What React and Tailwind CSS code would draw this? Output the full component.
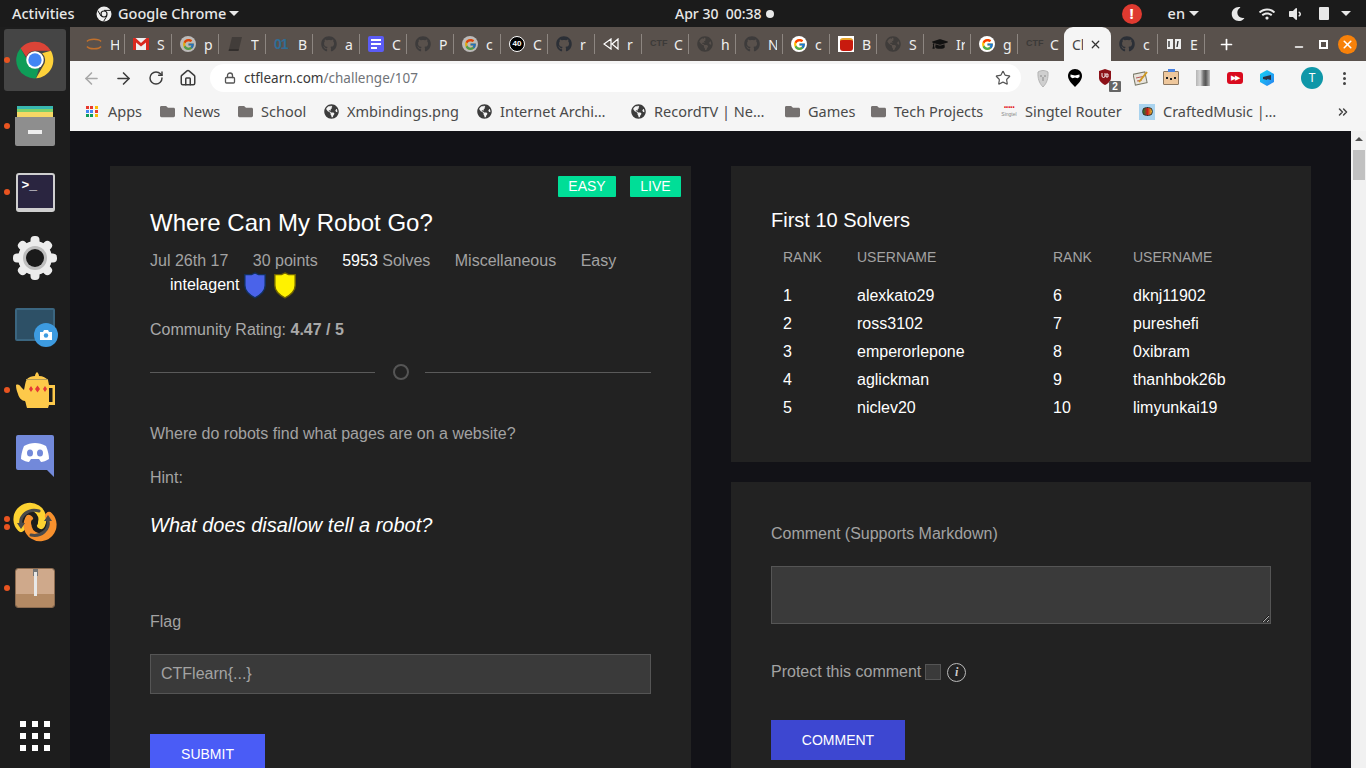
import { ArrowLeft, ArrowRight, RotateCw, Home, Lock, Star, X, Plus, Minus, ChevronsRight } from 'lucide-react'
import { FaGithub, FaGlobeAmericas, FaFolder, FaGraduationCap, FaMoon, FaWifi, FaVolumeDown } from 'react-icons/fa'
import { FcGoogle } from 'react-icons/fc'

// ── Little drawings ────────────────────────────────────────
function ChromeLogo({ size = 40 }) {
  return (
    <svg width={size} height={size} viewBox="0 0 48 48">
      <path d="M24 2a22 22 0 0 1 19.05 11H24a11 11 0 0 0-10.4 7.4L6.6 9.9A22 22 0 0 1 24 2z" fill="#db4437" />
      <path d="M43.05 13A22 22 0 0 1 25.2 46l9.2-16a11 11 0 0 0-1.9-14z" fill="#fdd13a" />
      <path d="M25.2 46A22 22 0 0 1 6.6 9.9L15 24.5A11 11 0 0 0 29 33.5z" fill="#0f9d58" />
      <circle cx="24" cy="24" r="10.5" fill="#fff" />
      <circle cx="24" cy="24" r="8" fill="#4285f4" />
    </svg>
  )
}

function ChromeMono() {
  return (
    <svg width="16" height="16" viewBox="0 0 16 16" fill="none">
      <circle cx="8" cy="8" r="7.5" fill="#eee" />
      <circle cx="8" cy="8" r="3.6" fill="#1b1b1b" />
      <circle cx="8" cy="8" r="2.4" fill="#eee" />
      <path d="M8 4.4h6.6M5 10 1.8 4.6M10.9 10 7.6 15.4" stroke="#1b1b1b" strokeWidth="1" />
    </svg>
  )
}

function Caret({ className = '' }) {
  return <span className={`inline-block w-0 h-0 border-l-[5px] border-r-[5px] border-t-[5px] border-l-transparent border-r-transparent border-t-[#e8e8e8] ${className}`} />
}

function Shield({ fill, edge }) {
  return (
    <svg width="24" height="27" viewBox="0 0 20 22.5">
      <path d="M10 0.800 L13 2.200 L18.500 2.200 L18.500 11 C18.500 16 14 19.500 10 21.500 C6 19.500 1.500 16 1.500 11 L1.500 2.200 L7 2.200 Z" fill={fill} stroke={edge} strokeWidth="1.2" />
    </svg>
  )
}

// ── Tab strip ──────────────────────────────────────────────
const TextIcon = ({ children, className }) => (
  <span className={`w-4 text-center font-['Liberation_Sans',sans-serif] font-bold text-[9px] ${className}`}>{children}</span>
)

const RingIcon = () => (
  <svg width="16" height="16" viewBox="0 0 16 16" fill="none">
    <path d="M1 5.500C3 2.500 13 2.500 15 5.500M1 10.500c2 3 12 3 14 0" stroke="#c0702c" strokeWidth="1.400" />
  </svg>
)
const GmailIcon = () => (
  <svg width="16" height="14" viewBox="0 0 16 14">
    <rect y="1" width="16" height="12" fill="#eee" />
    <path d="M0 1h2.500L8 6l5.500-5H16v12h-3V5.500L8 9.500l-5-4V13H0z" fill="#d9281e" />
  </svg>
)
const BookIcon = () => (
  <svg width="16" height="16" viewBox="0 0 16 16">
    <path d="M5 1h10l-3 12H2z" fill="#423d3a" />
    <path d="M2 13h10l-.5 2H1.500z" fill="#332f2d" />
  </svg>
)
const OneIcon = () => <span className="w-4 font-['Liberation_Sans',sans-serif] font-bold text-[14px] tracking-[-1px] text-[#2f6d96]">01</span>
const DocIcon = () => (
  <span className="w-4 h-4 rounded-[2px] bg-[#5b5cf6] flex flex-col justify-center gap-[2px] pl-[3px]">
    <span className="block h-[2px] w-[10px] bg-white" />
    <span className="block h-[2px] w-[10px] bg-white" />
    <span className="block h-[2px] w-[6px] bg-white" />
  </span>
)
const BlackBadge = () => (
  <span className="w-4 h-4 rounded-full bg-black border border-white flex items-center justify-center text-white font-['Liberation_Sans',sans-serif] font-bold text-[8px]">40</span>
)
const RewindIcon = () => (
  <svg width="16" height="12" viewBox="0 0 16 12" fill="none" stroke="#fff" strokeWidth="1.200">
    <path d="M8 1 1 6l7 5zM15 1 9 6l6 5z" />
  </svg>
)
const RedIcon = () => (
  <span className="w-4 h-4 bg-white flex items-center justify-center">
    <span className="w-[13px] h-[13px] rounded-[3px] bg-[#c81a0e] border-t-2 border-[#e8a52a]" />
  </span>
)
const OpenBook = () => (
  <svg width="16" height="14" viewBox="0 0 16 14">
    <path d="M1 2h6v10H1zM9 2h6v10H9z" fill="#eee" />
    <path d="M3 4v6M12 4l-1 6" stroke="#333" strokeWidth="1.400" />
  </svg>
)

const gh = <FaGithub size={16} color="#2b2f36" />
const ghDim = <FaGithub size={16} color="#3d3b3b" />
const globeDim = <FaGlobeAmericas size={16} color="#3f3c3a" />
const gGray = <span className="w-4 h-4 rounded-full bg-[#d5d5d5] flex items-center justify-center opacity-80"><FcGoogle size={13} /></span>
const gColor = <span className="w-4 h-4 rounded-full bg-white flex items-center justify-center"><FcGoogle size={13} /></span>
const ctf = <TextIcon className="text-[#3c3a38]">CTF</TextIcon>

const TABS = [
  [<RingIcon />, 'H'], [<GmailIcon />, 'S'], [gGray, 'p'], [<BookIcon />, 'T'], [<OneIcon />, 'B'],
  [ghDim, 'a'], [<DocIcon />, 'C'], [ghDim, 'P'], [gGray, 'c'], [<BlackBadge />, 'C'],
  [gh, 'r'], [<RewindIcon />, 'r'], [ctf, 'C'], [globeDim, 'h'], [ghDim, 'N'],
  [gColor, 'c'], [<RedIcon />, 'B'], [globeDim, 'S'], [<FaGraduationCap size={16} color="#111" />, 'Ir'], [gColor, 'g'],
  [ctf, 'C'],
]

function Tab({ icon, label }) {
  return (
    <div className="w-[47px] h-[20px] flex items-center shrink-0 border-r border-[#8d8681] pl-[8px]">
      <span className="w-4 h-4 flex items-center justify-center shrink-0">{icon}</span>
      <span className="ml-[8px] w-[9px] overflow-hidden text-[14px] text-[#efefef]">{label}</span>
    </div>
  )
}

function TabStrip() {
  return (
    <div className="h-[34px] bg-[#59514c] flex items-center pl-[8px] shrink-0 font-['Noto_Sans',sans-serif]">
      {TABS.map(([icon, label], i) => <Tab key={i} icon={icon} label={label} />)}
      <div className="w-[47px] h-[34px] self-end bg-[#f5f5f5] rounded-t-[9px] flex items-center pl-[8px] shrink-0 -ml-px">
        <span className="w-[11px] text-[14px] text-[#444] overflow-hidden">Cl</span>
        <X size={13} strokeWidth={2.2} className="text-[#333] ml-[6px]" />
      </div>
      <Tab icon={gh} label="c" />
      <Tab icon={<OpenBook />} label="E" />
      <Plus size={17} strokeWidth={2.4} className="text-white ml-[13px]" />
      <Minus size={12} strokeWidth={3} className="text-white ml-[58px] mt-[5px]" />
      <span className="w-[9px] h-[9px] border-2 border-white ml-[14px]" />
      <span className="w-[19px] h-[19px] rounded-full bg-[#f7810a] flex items-center justify-center ml-[10px]">
        <X size={13} strokeWidth={3} className="text-white" />
      </span>
    </div>
  )
}

// ── Toolbar ────────────────────────────────────────────────
function Extensions() {
  return (
    <div className="flex items-center ml-[6px]">
      <span className="w-[32px] flex justify-center">
        <svg width="12" height="17" viewBox="0 0 12 17">
          <path d="M1 2c3-2 7-2 10 0 .5 6-1 11-5 15C2 13 .5 8 1 2z" fill="#cfcfcf" stroke="#aaa" strokeWidth=".8" />
          <path d="M3 6h2M7 6h2M6 7v4" stroke="#8a8a8a" />
        </svg>
      </span>
      <span className="w-[32px] flex justify-center">
        <svg width="14" height="18" viewBox="0 0 14 18">
          <path d="M7 0c4 0 7 3 7 7 0 4-4 8-7 11-3-3-7-7-7-11 0-4 3-7 7-7z" fill="#000" />
          <path d="M2.500 5.500 7 6.500l4.500-1V8l-2 1.200L7 8.500l-2.500.7L2.500 8z" fill="#fff" />
        </svg>
      </span>
      <span className="w-[30px] flex justify-center relative">
        <svg width="12" height="16" viewBox="0 0 12 16" className="-ml-[2px] -mt-[3px]">
          <path d="M0 2 6 0l6 2v7c0 3-3 5.500-6 7-3-1.500-6-4-6-7z" fill="#8c1219" />
          <path d="M3 4v3a1.500 1.500 0 0 0 3 0V4M7 5h2v3H7z" stroke="#fff" strokeWidth=".9" fill="none" />
        </svg>
        <span className="absolute left-[18px] top-[9px] w-[12px] h-[11px] rounded-[1px] bg-[#666] text-white text-[10px] leading-[11px] text-center font-bold font-['Liberation_Sans',sans-serif]">2</span>
      </span>
      <span className="w-[40px] flex justify-center">
        <svg width="16" height="16" viewBox="0 0 16 16">
          <rect x="1" y="3" width="12" height="11" transform="rotate(-12 7 8)" fill="#e8e4dc" stroke="#776" />
          <path d="M3 8l7-1.500M4 11l5-1" stroke="#a33" strokeWidth=".8" />
          <path d="M6 12 14 2" stroke="#d09a22" strokeWidth="2" />
        </svg>
      </span>
      <span className="w-[20px] flex justify-center">
        <span className="relative w-[16px] h-[14px] rounded-[1px] bg-[#eec79c] border border-[#8a7660] flex items-center justify-center gap-[2px]">
          <span className="absolute -top-[3px] left-[4px] w-[7px] h-[3px] bg-[#4a82e0]" />
          <i className="block w-[2px] h-[2px] bg-[#222]" />
          <i className="block w-[2px] h-[2px] bg-[#222] mt-[2px]" />
          <i className="block w-[2px] h-[2px] bg-[#222]" />
        </span>
      </span>
      <span className="w-[44px] flex justify-center">
        <span className="w-[14px] h-[16px] bg-[linear-gradient(90deg,#b5b5b5_0%,#d8d8d8_30%,#6e6e6e_55%,#555_70%,#bdbdbd_100%)]" />
      </span>
      <span className="w-[20px] flex justify-center">
        <span className="w-[16px] h-[12px] rounded-[3px] bg-[#d90a1e] text-white text-[7px] leading-[12px] text-center tracking-[-1px]">▶▶</span>
      </span>
      <span className="w-[44px] flex justify-center">
        <svg width="14" height="16" viewBox="0 0 14 16">
          <defs>
            <linearGradient id="hexFill" x1="0" y1="0" x2="1" y2="1">
              <stop offset="0" stopColor="#12d6f5" />
              <stop offset="1" stopColor="#2a80f0" />
            </linearGradient>
          </defs>
          <path d="M7 0l7 4v8l-7 4-7-4V4z" fill="url(#hexFill)" />
          <path d="M3 7l4-1v4l-4-1zM7 6l4-1v5l-4-1z" fill="#2a3344" />
        </svg>
      </span>
    </div>
  )
}

function Toolbar() {
  return (
    <div className="h-[34px] bg-[#f5f5f5] flex items-center pl-[12px] shrink-0 font-['Noto_Sans',sans-serif]">
      <ArrowLeft size={19} strokeWidth={2} className="text-[#a8a8a8]" />
      <ArrowRight size={19} strokeWidth={2} className="text-[#3c3c3c] ml-[13px]" />
      <RotateCw size={16} strokeWidth={2.2} className="text-[#3c3c3c] ml-[15px]" />
      <Home size={18} strokeWidth={2} className="text-[#3c3c3c] ml-[15px]" />
      <div className="w-[811px] h-[28px] ml-[13px] rounded-full bg-white flex items-center pl-[14px] pr-[10px]">
        <Lock size={12} strokeWidth={2.6} className="text-[#555]" />
        <span className="ml-[8px] text-[13.500px] text-[#3a3a3a] pt-[1px]">ctflearn.com<span className="text-[#6f7378]">/challenge/107</span></span>
        <Star size={16} strokeWidth={1.8} className="text-[#555] ml-auto" />
      </div>
      <Extensions />
      <span className="w-[22px] h-[22px] rounded-full bg-[#0f97a8] text-white text-[12px] flex items-center justify-center ml-[12px]">T</span>
      <span className="flex flex-col gap-[2px] ml-[20px]">
        <i className="block w-[3px] h-[3px] rounded-full bg-[#444]" />
        <i className="block w-[3px] h-[3px] rounded-full bg-[#444]" />
        <i className="block w-[3px] h-[3px] rounded-full bg-[#444]" />
      </span>
    </div>
  )
}

// ── Bookmarks ──────────────────────────────────────────────
const folder = <FaFolder size={15} color="#757170" />
const globe = <FaGlobeAmericas size={15} color="#3c3c3c" />
const appsDots = ['#e8392c', '#e8392c', '#fbbc05', '#4285f4', '#4285f4', '#e8392c', '#0f9d58', '#0f9d58', '#fbbc05']
const appsGrid = (
  <span className="grid grid-cols-3 gap-[1px] w-[13px]">
    {appsDots.map((c, i) => <i key={i} className="block w-[3px] h-[3px]" style={{ background: c }} />)}
  </span>
)
const singtel = (
  <span className="flex flex-col items-center leading-none w-[17px]">
    <span className="text-[#e3151a] text-[7px] leading-[6px] tracking-[-0.5px]">•••••</span>
    <span className="text-[#888] text-[5px] leading-[7px] font-['Liberation_Sans',sans-serif]">Singtel</span>
  </span>
)
const crafted = (
  <span className="w-4 h-4 bg-[#a9d3ee] flex items-center justify-center">
    <span className="w-[11px] h-[9px] rounded-full bg-[linear-gradient(90deg,#1b7b2c,#c81a1a,#e8c02c)] border border-[#333]" />
  </span>
)

const BOOKMARKS = [
  [appsGrid, 'Apps', 'w-[76px]', 'pl-[1px]'],
  [folder, 'News', 'w-[78px]'],
  [folder, 'School', 'w-[86px]'],
  [globe, 'Xmbindings.png', 'w-[153px]'],
  [globe, 'Internet Archi…', 'w-[154px]'],
  [globe, 'RecordTV | Ne…', 'w-[154px]'],
  [folder, 'Games', 'w-[86px]'],
  [folder, 'Tech Projects', 'w-[131px]'],
  [singtel, 'Singtel Router', 'w-[138px]'],
  [crafted, 'CraftedMusic |…', 'w-[197px]'],
]

function Bookmarks() {
  return (
    <div className="h-[36px] bg-[#f5f5f5] flex items-center pl-[13px] pb-[3px] shrink-0 font-['Noto_Sans',sans-serif] text-[14.500px] text-[#4a4a4a] whitespace-nowrap">
      {BOOKMARKS.map(([icon, label, w, extra]) => (
        <div key={label} className={`flex items-center shrink-0 ${w} ${extra ?? ''}`}>
          <span className="w-4 flex justify-center shrink-0">{icon}</span>
          <span className="ml-[8px]">{label}</span>
        </div>
      ))}
      <ChevronsRight size={14} strokeWidth={2.6} className="text-[#444]" />
    </div>
  )
}

// ── Challenge card ─────────────────────────────────────────
function Badge({ children, width }) {
  return <span className={`h-[21px] text-center rounded-[1px] bg-[#00de97] text-white text-[14px] leading-[21px] ${width}`}>{children}</span>
}

function ChallengeCard() {
  return (
    <section className="relative w-[581px] bg-[#222222] px-[40px] pt-[42px] pb-[60px] shrink-0">
      <div className="absolute top-[10px] right-[10px] flex gap-[14px]">
        <Badge width="w-[58px]">EASY</Badge>
        <Badge width="w-[51px]">LIVE</Badge>
      </div>
      <h1 className="text-[24px] leading-[29px] text-white">Where Can My Robot Go?</h1>
      <div className="mt-[12px] text-[16px] leading-[24px] text-[#a3a3a3]">
        <div className="flex gap-[24.500px]">
          <span>Jul 26th 17</span>
          <span>30 points</span>
          <span><span className="text-white">5953</span> Solves</span>
          <span>Miscellaneous</span>
          <span>Easy</span>
        </div>
        <div className="flex items-center h-[24px] pl-[20px] text-white">
          <span>intelagent</span>
          <span className="ml-[4px] flex"><Shield fill="#4a63ea" edge="#12305c" /></span>
          <span className="ml-[6px] flex"><Shield fill="#fff200" edge="#6e6200" /></span>
        </div>
      </div>
      <p className="mt-[21px] text-[16px] leading-[24px] text-[#a9a9a9]">
        Community Rating: <strong className="font-bold">4.47 / 5</strong>
      </p>
      <div className="mt-[18px] flex items-center h-[24px]">
        <span className="h-px w-[225px] bg-[#5a5a5a]" />
        <span className="w-[16px] h-[16px] rounded-full border-2 border-[#555] ml-[18px]" />
        <span className="h-px w-[226px] bg-[#5a5a5a] ml-[16px]" />
      </div>
      <p className="mt-[38px] text-[16px] leading-[24px] text-[#a3a3a3]">Where do robots find what pages are on a website?</p>
      <p className="mt-[20px] text-[16px] leading-[24px] text-[#a3a3a3]">Hint:</p>
      <p className="mt-[21px] text-[20px] leading-[28px] italic text-white">What does disallow tell a robot?</p>
      <p className="mt-[71px] text-[16px] leading-[24px] text-[#a3a3a3]">Flag</p>
      <input
        readOnly
        placeholder="CTFlearn{...}"
        className="mt-[20px] w-full h-[40px] px-[10px] bg-[#3a3a3a] border border-[#555] text-[16px] text-[#a3a3a3] placeholder:text-[#a3a3a3] outline-none"
      />
      <button className="mt-[40px] block w-[115px] h-[40px] bg-[#4a5cf6] text-white text-[14px]">SUBMIT</button>
    </section>
  )
}

// ── Right column ───────────────────────────────────────────
const SOLVERS = [
  ['1', 'alexkato29', '6', 'dknj11902'],
  ['2', 'ross3102', '7', 'pureshefi'],
  ['3', 'emperorlepone', '8', '0xibram'],
  ['4', 'aglickman', '9', 'thanhbok26b'],
  ['5', 'niclev20', '10', 'limyunkai19'],
]

function SolversCard() {
  return (
    <section className="h-[296px] bg-[#222222] px-[40px] pt-[42px]">
      <h2 className="text-[20px] leading-[24px] text-white">First 10 Solvers</h2>
      <div className="grid grid-cols-[74px_196px_80px_1fr] px-[12px] mt-[15px] text-[14px] leading-[20px] text-[#a3a3a3] h-[22px]">
        <span>RANK</span><span>USERNAME</span><span>RANK</span><span>USERNAME</span>
      </div>
      <div className="mt-[13px]">
        {SOLVERS.map(row => (
          <div key={row[0]} className="grid grid-cols-[74px_196px_80px_1fr] px-[12px] h-[28px] items-center text-[16px] text-white">
            {row.map((cell, i) => <span key={i}>{cell}</span>)}
          </div>
        ))}
      </div>
    </section>
  )
}

function CommentCard() {
  return (
    <section className="flex-1 bg-[#222222] px-[40px] pt-[40px]">
      <label className="block text-[16px] leading-[24px] text-[#a3a3a3]">Comment (Supports Markdown)</label>
      <textarea readOnly className="block mt-[20px] w-[500px] h-[58px] bg-[#3a3a3a] border border-[#555] outline-none" />
      <div className="mt-[36px] flex items-center h-[24px] text-[16px] text-[#a3a3a3]">
        <span>Protect this comment</span>
        <span className="w-[16px] h-[16px] bg-[#3a3a3a] border border-[#555] ml-[4px]" />
        <span className="w-[19px] h-[19px] rounded-full border border-[#bbb] ml-[6px] flex items-center justify-center font-['Liberation_Serif',serif] italic font-bold text-[12px] text-[#ccc]">i</span>
      </div>
      <button className="mt-[36px] block w-[134px] h-[40px] bg-[#3d47d1] text-white text-[14px]">COMMENT</button>
    </section>
  )
}

// ── Ubuntu chrome ──────────────────────────────────────────
function TopBar() {
  return (
    <header className="h-[27px] bg-[#1b1b1b] flex items-center shrink-0 relative font-['Noto_Sans',sans-serif] text-[14.500px] font-medium text-[#e8e8e8]">
      <span className="ml-[12px] w-[64px]">Activities</span>
      <span className="ml-[20px] flex"><ChromeMono /></span>
      <span className="ml-[6px] w-[106px] whitespace-nowrap">Google Chrome</span>
      <Caret className="ml-[5px]" />
      <div className="absolute left-[675px] top-0 h-[27px] flex items-center">
        <span className="text-[14px]">Apr 30&nbsp;&nbsp;00:38</span>
        <span className="w-[8px] h-[8px] rounded-full bg-[#e8e8e8] ml-[4px]" />
      </div>
      <div className="ml-auto flex items-center pr-[15px]">
        <span className="w-[20px] h-[20px] rounded-full bg-[#df3a30] text-white font-bold text-[15px] flex items-center justify-center">!</span>
        <span className="ml-[26px]">en</span>
        <Caret className="ml-[4px]" />
        <FaMoon size={14} className="ml-[32px] text-[#e8e8e8]" />
        <FaWifi size={16} className="ml-[14px] text-[#e8e8e8]" />
        <FaVolumeDown size={16} className="ml-[12px] text-[#e8e8e8]" />
        <span className="ml-[16px] w-[10px] h-[13px] rounded-[1px] bg-[#e8e8e8]" />
        <Caret className="ml-[12px]" />
      </div>
    </header>
  )
}

function Dot({ top }) {
  return <span className="absolute left-[4px] w-[6px] h-[6px] rounded-full bg-[#e95420]" style={{ top }} />
}

const DOCK = [
  {
    dots: [28],
    icon: <ChromeLogo size={40} />,
    active: true,
  },
  {
    dots: [28],
    icon: (
      <span className="w-[40px] h-[40px] rounded-[2px] overflow-hidden flex flex-col items-center">
        <span className="w-[36px] h-[3px] bg-[#38b7b0]" />
        <span className="w-[36px] h-[3px] bg-[#7bd06c]" />
        <span className="w-[36px] h-[5px] bg-[#f6d765]" />
        <span className="w-full flex-1 bg-[#8e8e8e] flex items-center justify-center"><i className="block w-[14px] h-[4px] bg-[#eee]" /></span>
      </span>
    ),
  },
  {
    dots: [28],
    icon: (
      <span className="w-[39px] h-[39px] rounded-[3px] bg-[#2a2540] border-2 border-[#cfcfcf] border-b-4 text-white text-[13px] font-bold leading-[13px] pl-[4px] pt-[4px] font-['Liberation_Mono',monospace]">&gt;_</span>
    ),
  },
  {
    dots: [],
    icon: (
      <svg width="46" height="46" viewBox="0 0 46 46">
        {[0, 45, 90, 135, 180, 225, 270, 315].map(a => (
          <rect key={a} x="18.500" y="1" width="9" height="12" rx="4" fill="#ececec" transform={`rotate(${a} 23 23)`} />
        ))}
        <circle cx="23" cy="23" r="17" fill="#ececec" />
        <circle cx="23" cy="23" r="12" fill="#bdbdbd" />
        <circle cx="23" cy="23" r="9" fill="#1a1a1a" />
      </svg>
    ),
  },
  {
    dots: [],
    icon: (
      <span className="relative w-[40px] h-[33px] rounded-[2px] bg-[#2d5066] border-2 border-[#3b6680]">
        <span className="absolute -right-[5px] -bottom-[8px] w-[24px] h-[24px] rounded-full bg-[#3d9be0] flex items-center justify-center">
          <svg width="12" height="10" viewBox="0 0 12 10"><path d="M0 2h3l1-2h4l1 2h3v8H0z" fill="#fff" /><circle cx="6" cy="5.500" r="2.200" fill="#3d9be0" /></svg>
        </span>
      </span>
    ),
  },
  {
    dots: [28],
    icon: (
      <svg width="40" height="36" viewBox="0 0 40 36">
        <path d="M1 13c2-1 4 0 5 2l3 3c1-4 1-8 3-11 2-2 5-3 8-3 0-2 1-3 2-4 1 1 2 2 2 4 4 0 7 2 9 4l1 5h6v20h-6l-1 3H12c-1-3-1-5-2-7-3 0-6-3-7-7-1-3-2-5-2-9z" fill="#fdc94a" />
        <rect x="34" y="16" width="3.500" height="14" fill="#1b1b1b" />
        <path d="M11 7.500h22" stroke="#b09a58" strokeWidth="1" />
        <path d="M14 17l2-3 2 3-2 3zM20 17l2.500-3.500L25 17l-2.500 3.500zM28 17l2-3 2 3-2 3z" fill="#e53935" />
      </svg>
    ),
  },
  {
    dots: [],
    icon: (
      <svg width="38" height="42" viewBox="0 0 38 42">
        <path d="M2 0h34a2 2 0 0 1 2 2v40l-7-7H2a2 2 0 0 1-2-2V2a2 2 0 0 1 2-2z" fill="#7289da" />
        <path d="M8 11c7-4 15-4 22 0 2 5 3 9 3 13-3 2-6 3-8 3l-2-3h-8l-2 3c-2 0-5-1-8-3 0-4 1-8 3-13z" fill="#fff" />
        <ellipse cx="14" cy="18" rx="3" ry="3.500" fill="#7289da" />
        <ellipse cx="24" cy="18" rx="3" ry="3.500" fill="#7289da" />
      </svg>
    ),
  },
  {
    dots: [25, 33],
    icon: (
      <svg width="44" height="40" viewBox="0 0 44 40" fill="none" strokeLinecap="round">
        <path d="M8 26A12.500 12.500 0 1 1 28 23" stroke="#fdd231" strokeWidth="8" />
        <path d="M36 14A12.500 12.500 0 1 1 16 17" stroke="#f7902d" strokeWidth="8" />
        <path d="M8 23C6 14 15 6 26 9" stroke="#4a4a4a" strokeWidth="3" />
        <path d="M4 21h8l-4 6zM31 19h8l-4-6z" fill="#4a4a4a" />
        <path d="M18 33C28 35 37 28 35 18" stroke="#4a4a4a" strokeWidth="3" />
        <circle cx="21.500" cy="20.500" r="3.500" fill="#1d1d1d" />
      </svg>
    ),
  },
  {
    dots: [28],
    icon: (
      <span className="relative w-[40px] h-[40px] rounded-[3px] overflow-hidden border border-[#8d6c50] flex flex-col">
        <span className="h-[25px] bg-[#cfa98b]" />
        <span className="flex-1 bg-[#b48a64]" />
        <span className="absolute left-[17px] top-0 w-[5px] h-[7px] bg-[#777]" />
        <span className="absolute left-[18px] top-[3px] w-[3px] h-[24px] bg-[#e8e8e8]" />
      </span>
    ),
  },
]

function Dock() {
  return (
    <aside className="w-[70px] bg-[#1d1d1d] flex flex-col items-center shrink-0 pt-[2px] relative">
      {DOCK.map((item, i) => (
        <div key={i} className={`relative w-[62px] h-[62px] mb-[4px] rounded-[3px] flex items-center justify-center ${item.active ? 'bg-[#454545]' : ''}`}>
          {item.icon}
        </div>
      ))}
      <div className="mt-auto mb-[17px] grid grid-cols-3 gap-[6px]">
        {Array.from({ length: 9 }).map((_, i) => <i key={i} className="block w-[6px] h-[6px] bg-white" />)}
      </div>
      {DOCK.flatMap((item, i) => item.dots.map(d => <Dot key={`${i}-${d}`} top={2 + i * 66 + d} />))}
    </aside>
  )
}

export default function App() {
  return (
    <div className="w-[1366px] h-[768px] overflow-hidden flex flex-col bg-[#121217] font-['Liberation_Sans',sans-serif]">
      <TopBar />
      <div className="flex-1 flex min-h-0">
        <Dock />
        <div className="flex-1 flex flex-col min-w-0">
          <TabStrip />
          <Toolbar />
          <Bookmarks />
          <div className="flex-1 flex min-h-0 overflow-hidden">
            <main className="flex-1 flex gap-[40px] pl-[40px] pt-[35px] min-w-0">
              <ChallengeCard />
              <div className="w-[580px] flex flex-col gap-[20px] shrink-0">
                <SolversCard />
                <CommentCard />
              </div>
            </main>
            <div className="w-[15px] bg-[#f1f1f1] shrink-0 flex flex-col items-center pt-[6px]">
              <span className="w-0 h-0 border-l-[4px] border-r-[4px] border-b-[4px] border-l-transparent border-r-transparent border-b-[#505050]" />
              <span className="mt-[9px] w-[12px] h-[30px] bg-[#c1c1c1]" />
            </div>
          </div>
        </div>
      </div>
    </div>
  )
}
